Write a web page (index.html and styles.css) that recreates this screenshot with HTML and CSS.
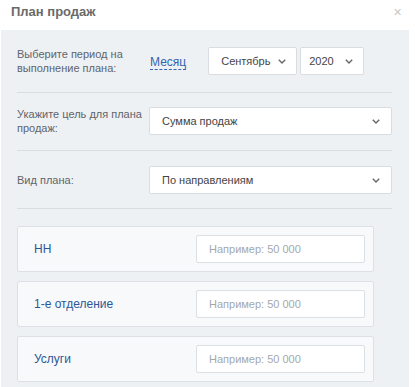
FILE: index.html
```html
<!DOCTYPE html>
<html lang="ru">
<head>
<meta charset="utf-8">
<title>План продаж</title>
<link rel="stylesheet" href="styles.css">
</head>
<body>
<div class="dialog">
  <div class="header">
    <span class="title">План продаж</span>
    <span class="close">&#x2715;</span>
  </div>
  <div class="panel">
    <div class="row row-first">
      <div class="label">Выберите период на выполнение плана:</div>
      <span class="period">Месяц</span>
      <div class="select select-month"><span>Сентябрь</span><svg class="chev" width="8" height="5" viewBox="0 0 8 5"><path d="M0.8 0.8 L4 4 L7.2 0.8" fill="none" stroke="#666" stroke-width="1.4"/></svg></div>
      <div class="select select-year"><span>2020</span><svg class="chev" width="8" height="5" viewBox="0 0 8 5"><path d="M0.8 0.8 L4 4 L7.2 0.8" fill="none" stroke="#666" stroke-width="1.4"/></svg></div>
    </div>
    <div class="row row-second">
      <div class="label">Укажите цель для плана продаж:</div>
      <div class="select select-wide"><span>Сумма продаж</span><svg class="chev" width="8" height="5" viewBox="0 0 8 5"><path d="M0.8 0.8 L4 4 L7.2 0.8" fill="none" stroke="#666" stroke-width="1.4"/></svg></div>
    </div>
    <div class="row row-third">
      <div class="label">Вид плана:</div>
      <div class="select select-wide"><span>По направлениям</span><svg class="chev" width="8" height="5" viewBox="0 0 8 5"><path d="M0.8 0.8 L4 4 L7.2 0.8" fill="none" stroke="#666" stroke-width="1.4"/></svg></div>
    </div>
    <div class="cards">
      <div class="card">
        <span class="card-label">НН</span>
        <div class="input">Например: 50 000</div>
      </div>
      <div class="card">
        <span class="card-label">1-е отделение</span>
        <div class="input">Например: 50 000</div>
      </div>
      <div class="card">
        <span class="card-label">Услуги</span>
        <div class="input">Например: 50 000</div>
      </div>
    </div>
  </div>
</div>
</body>
</html>
```
FILE: styles.css
```css
html, body {
  margin: 0;
  padding: 0;
  background: #ffffff;
  font-family: "Liberation Sans", Arial, sans-serif;
  color: #333;
}

.dialog {
  width: 415px;
  height: 387px;
  overflow: hidden;
}

.header {
  height: 30px;
  box-sizing: border-box;
  padding: 4px 13px 0 11px;
  display: flex;
  justify-content: space-between;
  align-items: flex-start;
}

.title {
  font-size: 13px;
  font-weight: bold;
  color: #6a6a6a;
  line-height: 16px;
}

.close {
  font-size: 11px;
  color: #c8c8c8;
  line-height: 16px;
}

.panel {
  margin-left: 1px;
  width: 408px;
  box-sizing: border-box;
  background: #eef1f4;
  padding: 0 17px 8px 16px;
  min-height: 357px;
}

.row {
  display: flex;
  align-items: center;
  border-bottom: 1px solid #d9dde2;
}

.row-first { padding: 17px 0 17px; }
.row-second { padding: 14px 0 15px; }
.row-third { padding: 15px 0 14px; }

.label {
  width: 130px;
  margin-right: 2px;
  font-size: 11px;
  line-height: 14px;
  color: #5f646a;
}

.period {
  font-size: 12px;
  color: #3463b0;
  line-height: 14px;
  border-bottom: 1px dashed #3463b0;
  margin-left: 1px;
  margin-right: 22px;
  margin-top: 2px;
}

.select {
  height: 28px;
  box-sizing: border-box;
  background: #fff;
  border: 1px solid #d8dde2;
  border-radius: 2px;
  display: flex;
  align-items: center;
  justify-content: space-between;
  font-size: 11px;
  color: #444;
}

.select-month {
  width: 89px;
  padding: 0 10px 0 12px;
  margin-right: 3px;
}

.select-year {
  width: 64px;
  padding: 0 10px 0 8px;
}

.select-wide {
  flex: 1;
  padding: 0 11px 0 12px;
}

.chev {
  display: block;
}

.cards {
  padding-top: 17px;
  display: flex;
  flex-direction: column;
  gap: 9px;
  width: 357px;
}

.card {
  height: 46px;
  box-sizing: border-box;
  background: #f8f9fb;
  border: 1px solid #dde1e6;
  border-radius: 2px;
  display: flex;
  align-items: center;
  justify-content: space-between;
  padding: 0 8px 0 16px;
}

.card-label {
  font-size: 12px;
  color: #2b5796;
}

.input {
  width: 169px;
  height: 28px;
  box-sizing: border-box;
  background: #fff;
  border: 1px solid #dcdfe3;
  border-radius: 2px;
  padding-left: 12px;
  font-size: 11px;
  line-height: 26px;
  color: #a3a8ad;
}
```
